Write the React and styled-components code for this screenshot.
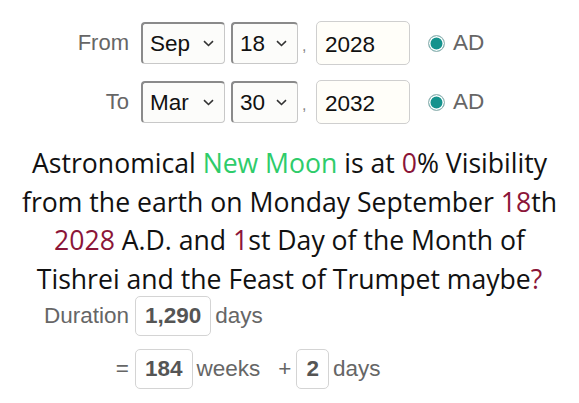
import React from "react";
import styled, { createGlobalStyle } from "styled-components";

const Global = createGlobalStyle`
  html, body { margin: 0; padding: 0; background: #fff; }
  body { font-family: "Liberation Sans", Arial, sans-serif; }
`;

const Page = styled.div`
  width: 579px;
  height: 403px;
  box-sizing: border-box;
  padding-top: 21px;
  display: flex;
  flex-direction: column;
`;

const DateRow = styled.div`
  display: flex;
  align-items: center;
  height: 44px;
  margin-bottom: ${(p) => p.$mb || 0}px;
`;

const Label = styled.span`
  width: 129px;
  text-align: right;
  font-size: 22px;
  color: #666;
  margin-right: 12px;
`;

const SelectWrap = styled.div`
  position: relative;
  width: ${(p) => p.$w}px;
  height: 42px;
  margin-right: ${(p) => p.$mr || 0}px;
`;

const Select = styled.select`
  appearance: none;
  -webkit-appearance: none;
  width: 100%;
  height: 100%;
  box-sizing: border-box;
  margin: 0;
  padding: 0 0 0 7px;
  font-family: "Liberation Sans", Arial, sans-serif;
  font-size: 22.5px;
  color: #111;
  background: #fcfcfa;
  border-radius: 4px;
  border: 1px solid #c8c8c8;
  border-top: 2px solid #8a8a8a;
  border-left: 2px solid #8a8a8a;
  outline: none;
`;

const Chevron = styled.svg`
  position: absolute;
  right: 11px;
  top: 18px;
  width: 11px;
  height: 7px;
  pointer-events: none;
`;

const Comma = styled.span`
  font-size: 16px;
  color: #888;
  width: 18px;
  padding-left: 4px;
  align-self: flex-end;
  padding-bottom: 10px;
  box-sizing: border-box;
`;

const YearInput = styled.input`
  width: 94px;
  height: 44px;
  box-sizing: border-box;
  border: 1px solid #cfcfcf;
  border-radius: 5px;
  background: #fffef9;
  font-family: "Liberation Sans", Arial, sans-serif;
  font-size: 22.5px;
  color: #111;
  padding: 4px 0 0 8px;
  margin: 0 18px 0 0;
  outline: none;
`;

const Radio = styled.span`
  flex: none;
  width: 17px;
  height: 17px;
  box-sizing: border-box;
  border-radius: 50%;
  border: 1px solid #a3b9b9;
  background: #15928d;
  box-shadow: inset 0 0 0 1.5px #fff;
  margin-right: 8px;
`;

const Era = styled.span`
  font-size: 22.5px;
  color: #666;
`;

const Message = styled.p`
  margin: 20px 0 0;
  text-align: center;
  font-family: "Open Sans", "Noto Sans", sans-serif;
  font-size: 26.6px;
  line-height: 38.5px;
  color: #111;
  white-space: nowrap;
`;

const Green = styled.span`
  color: #2ecc6a;
`;

const Red = styled.span`
  color: #8b1538;
`;

const CountRow = styled.div`
  display: flex;
  align-items: center;
  height: 40px;
  margin-top: ${(p) => p.$mt || 0}px;
  font-size: 22.5px;
  color: #666;
`;

const CountLabel = styled.span`
  width: 129px;
  text-align: right;
  margin-right: 6px;
`;

const Box = styled.span`
  height: 40px;
  box-sizing: border-box;
  display: inline-flex;
  align-items: center;
  padding: 0 9px;
  border: 1px solid #d4d4d4;
  border-radius: 5px;
  font-weight: bold;
  color: #555;
  margin-right: 4px;
`;

const Unit = styled.span`
  margin-right: ${(p) => p.$mr || 0}px;
`;

const Plus = styled.span`
  margin-right: 5px;
`;

function Dropdown({ width, value, options, mr }) {
  return (
    <SelectWrap $w={width} $mr={mr}>
      <Select defaultValue={value}>
        {options.map((o) => (
          <option key={o}>{o}</option>
        ))}
      </Select>
      <Chevron viewBox="0 0 11 7">
        <path d="M1 1.2 L5.5 5.5 L10 1.2" fill="none" stroke="#333" strokeWidth="1.6" />
      </Chevron>
    </SelectWrap>
  );
}

const months = ["Jan", "Feb", "Mar", "Apr", "May", "Jun", "Jul", "Aug", "Sep", "Oct", "Nov", "Dec"];
const days = Array.from({ length: 31 }, (_, i) => String(i + 1));

function DateLine({ label, month, day, year, mb }) {
  return (
    <DateRow $mb={mb}>
      <Label>{label}</Label>
      <Dropdown width={84} value={month} options={months} mr={6} />
      <Dropdown width={67} value={day} options={days} />
      <Comma>,</Comma>
      <YearInput defaultValue={year} />
      <Radio />
      <Era>AD</Era>
    </DateRow>
  );
}

export default function App() {
  return (
    <>
      <Global />
      <Page>
        <DateLine label="From" month="Sep" day="18" year="2028" mb={15} />
        <DateLine label="To" month="Mar" day="30" year="2032" />
        <Message>
          Astronomical <Green>New Moon</Green> is at <Red>0</Red>% Visibility
          <br />
          from the earth on Monday September <Red>18</Red>th
          <br />
          <Red>2028</Red> A.D. and <Red>1</Red>st Day of the Month of
          <br />
          Tishrei and the Feast of Trumpet maybe<Red>?</Red>
        </Message>
        <CountRow $mt={-2}>
          <CountLabel>Duration</CountLabel>
          <Box>1,290</Box>
          <Unit>days</Unit>
        </CountRow>
        <CountRow $mt={13}>
          <CountLabel>=</CountLabel>
          <Box>184</Box>
          <Unit $mr={18}>weeks</Unit>
          <Plus>+</Plus>
          <Box>2</Box>
          <Unit>days</Unit>
        </CountRow>
      </Page>
    </>
  );
}
